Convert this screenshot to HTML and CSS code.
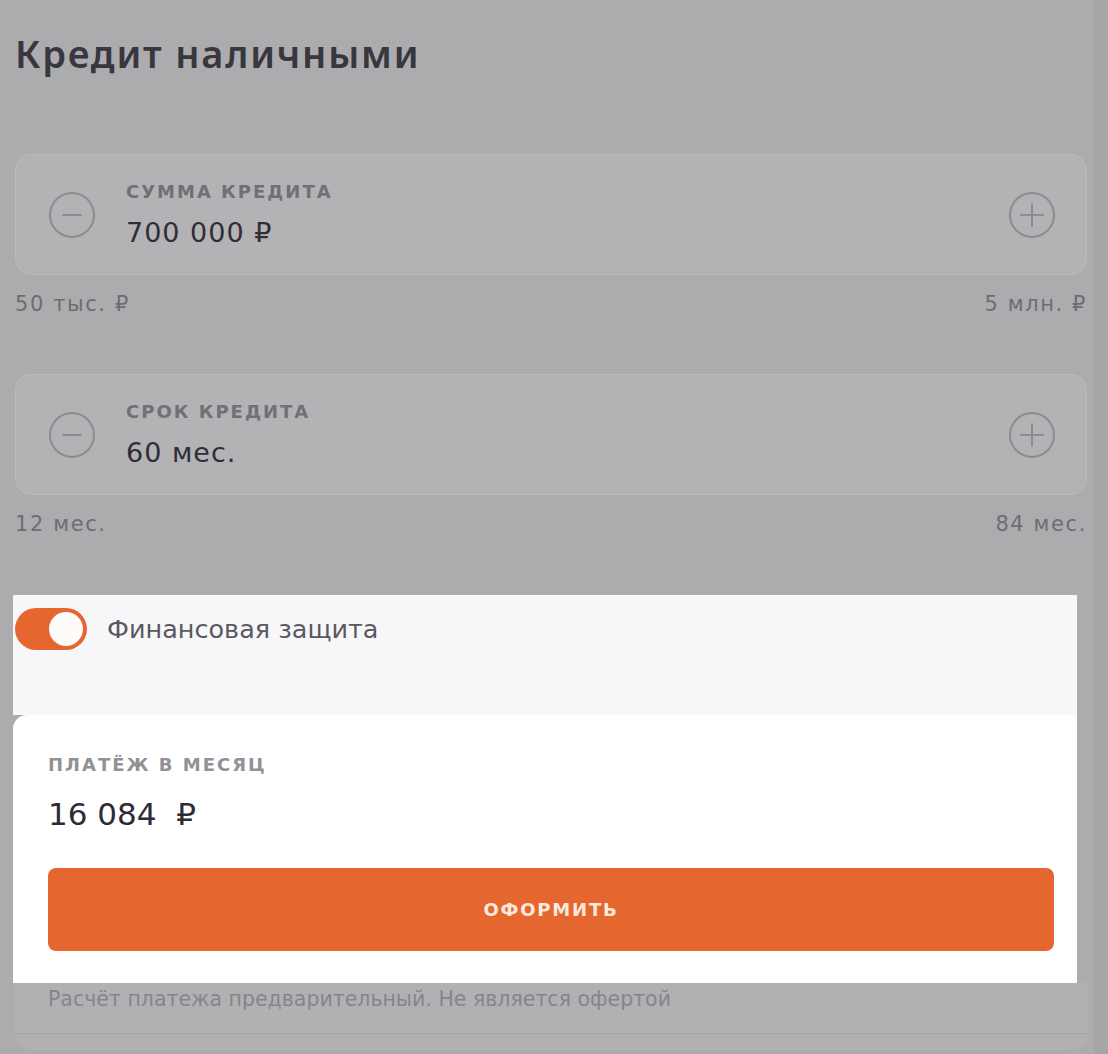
FILE: index.html
```html
<!DOCTYPE html>
<html lang="ru">
<head>
<meta charset="utf-8">
<title>Кредит наличными</title>
<link rel="stylesheet" href="styles.css">
</head>
<body>
<div class="page">
  <h1 class="title">Кредит наличными</h1>

  <div class="field">
    <span class="round-btn">
      <svg viewBox="0 0 48 48" width="48" height="48"><circle cx="24" cy="24" r="22" fill="none" stroke="#8c8c90" stroke-width="2"/><path d="M15 24h18" stroke="#8c8c90" stroke-width="2" stroke-linecap="round"/></svg>
    </span>
    <div class="field-text">
      <div class="field-label">СУММА КРЕДИТА</div>
      <div class="field-value">700 000 ₽</div>
    </div>
    <span class="round-btn">
      <svg viewBox="0 0 48 48" width="48" height="48"><circle cx="24" cy="24" r="22" fill="none" stroke="#8c8c90" stroke-width="2"/><path d="M13 24h22M24 13v22" stroke="#8c8c90" stroke-width="2" stroke-linecap="round"/></svg>
    </span>
  </div>
  <div class="range"><span>50 тыс. ₽</span><span>5 млн. ₽</span></div>

  <div class="field field-second">
    <span class="round-btn">
      <svg viewBox="0 0 48 48" width="48" height="48"><circle cx="24" cy="24" r="22" fill="none" stroke="#8c8c90" stroke-width="2"/><path d="M15 24h18" stroke="#8c8c90" stroke-width="2" stroke-linecap="round"/></svg>
    </span>
    <div class="field-text">
      <div class="field-label">СРОК КРЕДИТА</div>
      <div class="field-value">60 мес.</div>
    </div>
    <span class="round-btn">
      <svg viewBox="0 0 48 48" width="48" height="48"><circle cx="24" cy="24" r="22" fill="none" stroke="#8c8c90" stroke-width="2"/><path d="M13 24h22M24 13v22" stroke="#8c8c90" stroke-width="2" stroke-linecap="round"/></svg>
    </span>
  </div>
  <div class="range"><span>12 мес.</span><span>84 мес.</span></div>

  <div class="spot">
    <div class="toggle-row">
      <span class="toggle"><span class="knob"></span></span>
      <span class="toggle-label">Финансовая защита</span>
    </div>
    <div class="pay-card">
      <div class="pay-label">ПЛАТЁЖ В МЕСЯЦ</div>
      <div class="pay-value">16 084&nbsp; ₽</div>
      <button class="submit">ОФОРМИТЬ</button>
    </div>
  </div>

  <div class="footer">
    <div class="note">Расчёт платежа предварительный. Не является офертой</div>
  </div>
</div>
<div class="scroll-strip"></div>
</body>
</html>
```

FILE: styles.css
```css
html, body {
  margin: 0;
  padding: 0;
}
body {
  background: #acacae;
  font-family: "DejaVu Sans", "Noto Sans", sans-serif;
  color: #35343c;
  height: 1054px;
  overflow: hidden;
  position: relative;
}
.page {
  padding: 28px 21px 0 15px;
  width: 1072px;
}
.title {
  margin: 0 0 76px 0;
  font-family: "Noto Sans", "Open Sans", sans-serif;
  font-size: 38px;
  line-height: 50px;
  font-weight: 600;
  color: #38373f;
  letter-spacing: 1.8px;
}
.field {
  height: 121px;
  border: 1px solid #bbbbbd;
  border-radius: 16px;
  background: #b3b3b5;
  display: flex;
  align-items: center;
  padding: 0 30px 0 32px;
  box-sizing: border-box;
}
.round-btn {
  width: 48px;
  height: 48px;
  display: flex;
  flex: none;
}
.field-text {
  flex: 1;
  padding-left: 30px;
}
.field-label {
  font-size: 18px;
  font-weight: 700;
  letter-spacing: 2px;
  color: #707077;
  line-height: 22px;
}
.field-value {
  font-size: 27px;
  letter-spacing: 1px;
  color: #2f2e36;
  line-height: 32px;
  margin-top: 14px;
}
.range {
  display: flex;
  justify-content: space-between;
  font-size: 21px;
  line-height: 28px;
  letter-spacing: 1.6px;
  color: #6d6d73;
  margin-top: 15px;
}
.field-second {
  margin-top: 56px;
}
.spot {
  margin: 57px 0 0 -2px;
  width: 1064px;
}
.toggle-row {
  background: #f7f7f9;
  height: 120px;
  display: flex;
  align-items: flex-start;
  padding: 13px 0 0 2px;
  box-sizing: border-box;
}
.toggle {
  width: 72px;
  height: 42px;
  border-radius: 21px;
  background: #e5672f;
  position: relative;
  flex: none;
}
.knob {
  position: absolute;
  top: 4px;
  right: 4px;
  width: 34px;
  height: 34px;
  border-radius: 50%;
  background: #fdfcfb;
}
.toggle-label {
  margin-left: 20px;
  font-size: 25.5px;
  line-height: 42px;
  color: #5a5960;
}
.pay-card {
  background: #ffffff;
  border-radius: 14px 0 0 0;
  padding: 38px 23px 32px 35px;
  height: 268px;
  box-sizing: border-box;
}
.pay-label {
  font-size: 18px;
  font-weight: 700;
  letter-spacing: 2px;
  color: #929198;
  line-height: 24px;
}
.pay-value {
  margin-top: 17px;
  font-size: 31px;
  color: #2d2c34;
  line-height: 40px;
}
.submit {
  margin-top: 34px;
  display: block;
  width: 100%;
  height: 83px;
  border: none;
  border-radius: 8px;
  background: #e5672f;
  color: #fbe8dc;
  font-family: inherit;
  font-size: 18px;
  font-weight: 700;
  letter-spacing: 1.8px;
}
.footer {
  width: 1073px;
  height: 67px;
  background: #b1b1b3;
  border-radius: 0 0 18px 18px;
  box-sizing: border-box;
  padding-top: 2px;
}
.note {
  font-size: 20.5px;
  line-height: 28px;
  color: #86858c;
  padding-left: 33px;
  height: 48px;
  border-bottom: 1px solid #a5a5a7;
}
.scroll-strip {
  position: absolute;
  top: 0;
  right: 0;
  width: 15px;
  height: 100%;
  background: #a6a6a8;
}
```
